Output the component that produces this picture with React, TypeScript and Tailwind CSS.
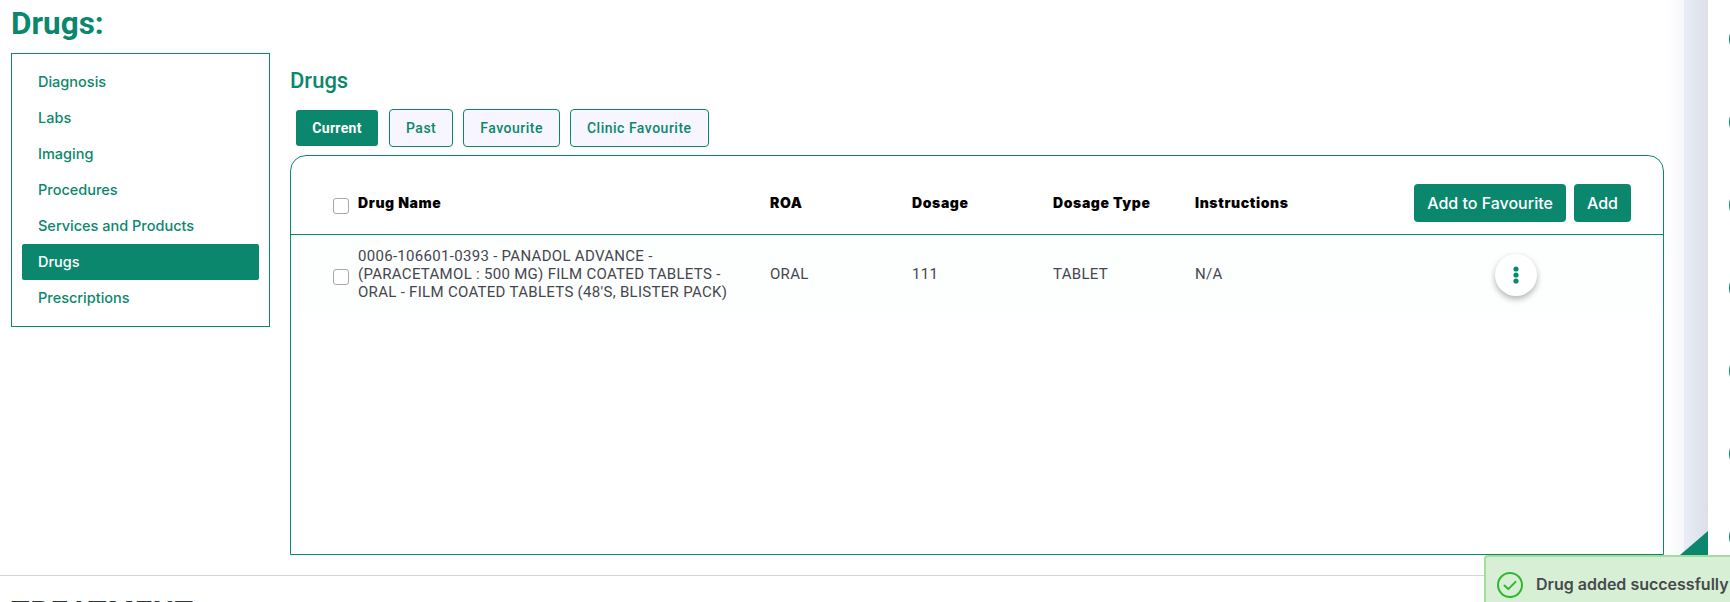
import React from 'react';

const NAV = ['Diagnosis', 'Labs', 'Imaging', 'Procedures', 'Services and Products', 'Drugs', 'Prescriptions'];
const TABS = ['Past', 'Favourite', 'Clinic Favourite'];

const Checkbox: React.FC = () => (
  <span className="block w-4 h-4 shrink-0 bg-white border border-[#a9a9a9] rounded-[3px]" />
);

const App: React.FC = () => {
  return (
    <div className="relative h-[602px] w-full flex overflow-hidden bg-white font-['Roboto',sans-serif]">
      <div className="w-[1665px] shrink-0">
        <div className="pl-[11px] h-[53px] pt-[5px]">
          <h1 className="text-[31.5px] leading-[38px] font-bold text-[#0b876d]">Drugs:</h1>
        </div>

        <div className="flex h-[523px] border-b border-[#d4d4d4] pb-[20px]">
          <nav className="ml-[11px] w-[259px] h-[274px] shrink-0 border border-[#0b876d] p-[10px] font-['Inter',sans-serif]">
            {NAV.map((item) => (
              <div
                key={item}
                className={`h-9 pl-4 flex items-center text-[14.5px] font-medium rounded-[2px] ${
                  item === 'Drugs' ? 'bg-[#0b876d] text-white' : 'text-[#0b876d]'
                }`}
              >
                {item}
              </div>
            ))}
          </nav>

          <section className="ml-[20px] w-[1374px]">
            <h2 className="h-[57px] pt-[15px] text-[22px] leading-[26px] font-medium text-[#0b876d]">Drugs</h2>
            <div className="flex items-center gap-[10px] pl-[6px] h-[45px] pb-[9px]">
              <button className="h-9 w-[82px] mr-px rounded-[3px] bg-[#0b876d] text-white text-[14px] font-bold tracking-[0.3px]">Current</button>
              {TABS.map((tab) => (
                <button
                  key={tab}
                  className="h-[38px] px-4 rounded-[4px] border border-[#0b876d] bg-[#f7f5ff] text-[#0b876d] text-[14px] font-medium tracking-[0.5px]"
                >
                  {tab}
                </button>
              ))}
            </div>

            <div className="h-[400px] border border-[#0b876d] rounded-t-[16px] bg-white">
              <div className="h-[79px] flex border-b border-[#0b876d]">
                <div className="pl-[42px] pt-[42px] pr-[9px]">
                  <Checkbox />
                </div>
                <div className="flex-1 grid grid-cols-[412px_142px_141px_142px_1fr] items-center h-[52px] mt-[20px] text-[14px] font-black tracking-[0.6px] text-black font-['Inter',sans-serif]">
                  <span>Drug Name</span>
                  <span>ROA</span>
                  <span>Dosage</span>
                  <span>Dosage Type</span>
                  <span>Instructions</span>
                </div>
                <div className="flex gap-2 pt-[28px] pr-[32px] font-['Inter',sans-serif]">
                  <button className="h-[38px] w-[152px] rounded-[4px] bg-[#0b876d] text-white text-[16px] font-medium">Add to Favourite</button>
                  <button className="h-[38px] w-[57px] rounded-[4px] bg-[#0b876d] text-white text-[16px] font-medium">Add</button>
                </div>
              </div>

              <div className="h-[78px] flex items-center bg-[#fdfefe] text-[15px] leading-[18px] tracking-[0.3px] text-[#45464e]">
                <div className="pl-[42px] pr-[9px] pt-[6px]">
                  <Checkbox />
                </div>
                <div className="flex-1 grid grid-cols-[412px_142px_141px_142px_1fr] items-center">
                  <span className="w-[380px]">
                    0006-106601-0393 - PANADOL ADVANCE - (PARACETAMOL : 500 MG) FILM COATED TABLETS - ORAL - FILM COATED TABLETS (48'S, BLISTER PACK)
                  </span>
                  <span>ORAL</span>
                  <span>111</span>
                  <span>TABLET</span>
                  <span>N/A</span>
                </div>
                <div className="w-[288px] flex justify-center pr-[6px] pt-[2px]">
                  <button className="w-[42px] h-[42px] rounded-full bg-white shadow-[0_3px_6px_rgba(0,0,0,0.3)] flex items-center justify-center">
                    <svg width="6" height="18" viewBox="0 0 6 18" fill="#0b876d">
                      <circle cx="3" cy="3" r="2.6" />
                      <circle cx="3" cy="9" r="2.6" />
                      <circle cx="3" cy="15" r="2.6" />
                    </svg>
                  </button>
                </div>
              </div>
            </div>
          </section>
        </div>

        <div className="pl-[11px] pt-[18px] text-[30px] leading-[36px] font-bold text-[#2f3a38] tracking-[1px]">TREATMENT</div>
      </div>

      <div className="w-[19px] shrink-0 bg-gradient-to-r from-white to-[#f6f7fa]" />
      <div className="w-[24px] shrink-0 bg-gradient-to-r from-[#e9edf6] to-[#dcdfe7]" />

      <div className="flex-1 overflow-hidden pt-[23px] pl-[21px]">
        <div className="flex flex-col gap-[51px]">
          {[0, 1, 2, 3, 4, 5, 6].map((n) => (
            <span key={n} className="block w-8 h-8 shrink-0 rounded-full border-2 border-[#0b876d]" />
          ))}
        </div>
      </div>

      {/* corner fold above the toast */}
      <div className="absolute left-[1680px] top-[531px] w-[28px] h-[24px] bg-[#0b876d] [clip-path:polygon(100%_0,100%_100%,0_100%)]" />

      {/* toast */}
      <div className="absolute left-[1484px] top-[555px] w-[300px] h-[60px] bg-[#d7f0d5] border-2 border-[#a3dc9d] rounded-[4px] flex items-start pt-[15px] pl-[11px] gap-[13px] font-['Inter',sans-serif]">
        <svg width="26" height="26" viewBox="0 0 26 26" fill="none" className="shrink-0">
          <circle cx="13" cy="13" r="12" stroke="#2eb82e" strokeWidth="2" />
          <path d="M7.5 13.5l3.8 3.6 7.2-7.2" stroke="#2eb82e" strokeWidth="2" strokeLinecap="round" strokeLinejoin="round" />
        </svg>
        <span className="text-[16px] leading-[24px] font-semibold text-[#48494c] whitespace-nowrap">Drug added successfully</span>
      </div>
    </div>
  );
};

export default App;
